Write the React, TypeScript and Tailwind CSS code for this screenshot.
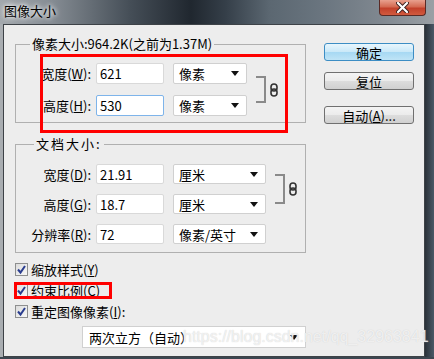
import React from "react";

const FONT = "font-['Noto_Sans_CJK_SC',sans-serif]";

function Arrow() {
  return (
    <svg width="8" height="5" viewBox="0 0 8 5" className="shrink-0">
      <polygon points="0,0 8,0 4,5" fill="#111" />
    </svg>
  );
}

function Chain({ className = "" }: { className?: string }) {
  return (
    <svg width="8" height="14" viewBox="0 0 8 14" className={className}>
      <rect x="1" y="1" width="6" height="7" rx="3" fill="none" stroke="#333" strokeWidth="1.6" />
      <rect x="1" y="6" width="6" height="7" rx="3" fill="none" stroke="#333" strokeWidth="1.6" />
    </svg>
  );
}

function Bracket({ h }: { h: number }) {
  return (
    <div
      className="w-[10px] shrink-0 border-y-2 border-r-2 border-[#8a8a8a]"
      style={{ height: h }}
    />
  );
}

function Label({ text, k, w = "w-[75px]" }: { text: string; k: string; w?: string }) {
  return (
    <span className={`${w} shrink-0 text-right text-[13px] leading-none text-black`}>
      {text}(<span className="underline">{k}</span>):
    </span>
  );
}

function Field({ value, h, focused }: { value: string; h: string; focused?: boolean }) {
  return (
    <div
      className={`ml-[5px] flex w-[68px] items-center rounded-[2px] border bg-white pl-[3px] text-[13px] leading-none ${h} ${
        focused ? "border-[#7eb4ea]" : "border-[#d9d9d9]"
      }`}
    >
      {value}
    </div>
  );
}

function Select({ value, w, h }: { value: string; w: string; h: string }) {
  return (
    <div
      className={`ml-[9px] flex items-center justify-between rounded-[2px] border border-[#d0d0d0] bg-white pl-[5px] pr-[7px] text-[13px] leading-none ${w} ${h}`}
    >
      <span>{value}</span>
      <Arrow />
    </div>
  );
}

function Check({ text, k, tail = "" }: { text: string; k: string; tail?: string }) {
  return (
    <div className="flex h-[21px] items-center">
      <div className="flex h-[13px] w-[13px] items-center justify-center border border-[#8e8f8f] bg-[linear-gradient(135deg,#dcdcdc,#f8f8f8)]">
        <svg width="11" height="11" viewBox="0 0 11 11">
          <path d="M2 5.5 L4.5 8.5 L9 2" fill="none" stroke="#2a3d8f" strokeWidth="2" />
        </svg>
      </div>
      <span className="ml-[3px] text-[13px] leading-none">
        {text}(<span className="underline">{k}</span>){tail}
      </span>
    </div>
  );
}

function Button({ children, primary }: { children: React.ReactNode; primary?: boolean }) {
  return (
    <div
      className={`flex h-[18px] w-[90px] items-center justify-center rounded-[3px] border text-[13px] leading-none ${
        primary
          ? "border-[#3c8dc4] bg-[linear-gradient(180deg,#e8f6fd_0%,#c9e8f8_50%,#a6d8f3_51%,#bfe4f6_100%)]"
          : "border-[#707070] bg-[linear-gradient(180deg,#f4f4f4_0%,#ebebeb_50%,#dddddd_51%,#d0d0d0_100%)]"
      }`}
    >
      {children}
    </div>
  );
}

export default function App() {
  return (
    <div className={`relative h-[359px] w-[434px] overflow-hidden text-black ${FONT}`}>
      {/* title bar */}
      <div className="flex h-[24px] items-start justify-between bg-[linear-gradient(90deg,#a3a8ad_0%,#858c93_12%,#454e57_30%,#20272f_44%,#353f49_52%,#5b6771_62%,#6b7680_75%,#808890_88%,#9aa0a5_100%)]">
        <span className="ml-[4px] mt-[4px] text-[13px] leading-none text-black [text-shadow:0_0_4px_#fff,0_0_6px_#fff]">
          图像大小
        </span>
        <div className="mr-[8px] flex h-[16px] w-[47px] items-center justify-center rounded-b-[4px] border border-t-0 border-[#5a2a25] bg-[linear-gradient(180deg,#e8a08e_0%,#d46a52_45%,#c2402a_55%,#d15a3e_100%)]">
          <svg width="13" height="11" viewBox="0 0 13 11">
            <path d="M2 1 L11 10 M11 1 L2 10" stroke="#3a2020" strokeWidth="4" strokeLinecap="round" />
            <path d="M2 1 L11 10 M11 1 L2 10" stroke="#fff" strokeWidth="2.2" strokeLinecap="round" />
          </svg>
        </div>
      </div>

      <div className="flex h-[333px]">
        <div className="w-[3px] bg-[#a9adb1]" />
        {/* dialog body */}
        <div className="flex h-[333px] w-[422px] border border-[#3d4247] bg-[#ededed]">
          {/* left column */}
          <div className="ml-[11px] flex w-[291px] flex-col">
            <fieldset className="mt-[11px] border border-[#b0b0b0] pb-[6px]">
              <legend className="ml-[14px] px-[2px] text-[13px] leading-[16px]">
                像素大小:964.2K(之前为1.37M)
              </legend>
              <div className="mt-[11px] flex items-center">
                <div className="flex flex-col gap-[11px]">
                  <div className="flex items-center">
                    <Label text="宽度" k="W" />
                    <Field value="621" h="h-[21px]" />
                    <Select value="像素" w="w-[74px]" h="h-[21px]" />
                  </div>
                  <div className="flex items-center">
                    <Label text="高度" k="H" />
                    <Field value="530" h="h-[21px]" focused />
                    <Select value="像素" w="w-[74px]" h="h-[21px]" />
                  </div>
                </div>
                <div className="ml-[9px]">
                  <Bracket h={27} />
                </div>
                <Chain className="ml-[4px]" />
              </div>
            </fieldset>

            <fieldset className="mt-[13px] border border-[#b0b0b0] pb-[8px]">
              <legend className="ml-[18px] px-[2px] text-[13px] leading-[16px] tracking-[2px]">
                文档大小:
              </legend>
              <div className="mt-[12px] flex items-center">
                <div className="flex flex-col gap-[10px]">
                  <div className="flex items-center">
                    <Label text="宽度" k="D" />
                    <Field value="21.91" h="h-[20px]" />
                    <Select value="厘米" w="w-[93px]" h="h-[20px]" />
                  </div>
                  <div className="flex items-center">
                    <Label text="高度" k="G" />
                    <Field value="18.7" h="h-[20px]" />
                    <Select value="厘米" w="w-[93px]" h="h-[20px]" />
                  </div>
                </div>
                <div className="ml-[9px]">
                  <Bracket h={30} />
                </div>
                <Chain className="ml-[4px]" />
              </div>
              <div className="mt-[10px] flex items-center">
                <Label text="分辨率" k="R" />
                <Field value="72" h="h-[20px]" />
                <Select value="像素/英寸" w="w-[93px]" h="h-[20px]" />
              </div>
            </fieldset>

            <div className="mt-[6px] flex flex-col">
              <Check text="缩放样式" k="Y" />
              <Check text="约束比例" k="C" />
              <Check text="重定图像像素" k="I" tail=":" />
            </div>

            <div className="ml-[67px] mt-[4px] flex h-[22px] w-[224px] items-center justify-between border border-[#d0d0d0] bg-white pl-[6px] pr-[7px] text-[13px] leading-none">
              <span>两次立方（自动）</span>
              <Arrow />
            </div>
          </div>

          {/* buttons */}
          <div className="ml-[18px] flex flex-col">
            <div className="mt-[18px]">
              <Button primary>确定</Button>
            </div>
            <div className="mt-[11px]">
              <Button>复位</Button>
            </div>
            <div className="mt-[16px]">
              <Button>
                自动(<span className="underline">A</span>)...
              </Button>
            </div>
          </div>
        </div>
        <div className="w-[9px] bg-[linear-gradient(90deg,#2a3139,#4a5967)]" />
      </div>
      <div className="h-[2px] bg-[#3c4650]" />

      {/* annotations */}
      <div className="pointer-events-none absolute left-[40px] top-[54px] h-[79px] w-[248px] border-[3px] border-[#ff0000]" />
      <div className="pointer-events-none absolute left-[14px] top-[282px] h-[17px] w-[98px] border-[3px] border-[#ff0000]" />

      {/* watermark */}
      <span className="pointer-events-none absolute left-[183px] top-[329px] font-['Liberation_Sans',sans-serif] text-[16px] leading-none text-white/70 [text-shadow:0_0_1px_#c8c8c8]">
        https://blog.csdn.net/qq_32963841
      </span>
    </div>
  );
}
